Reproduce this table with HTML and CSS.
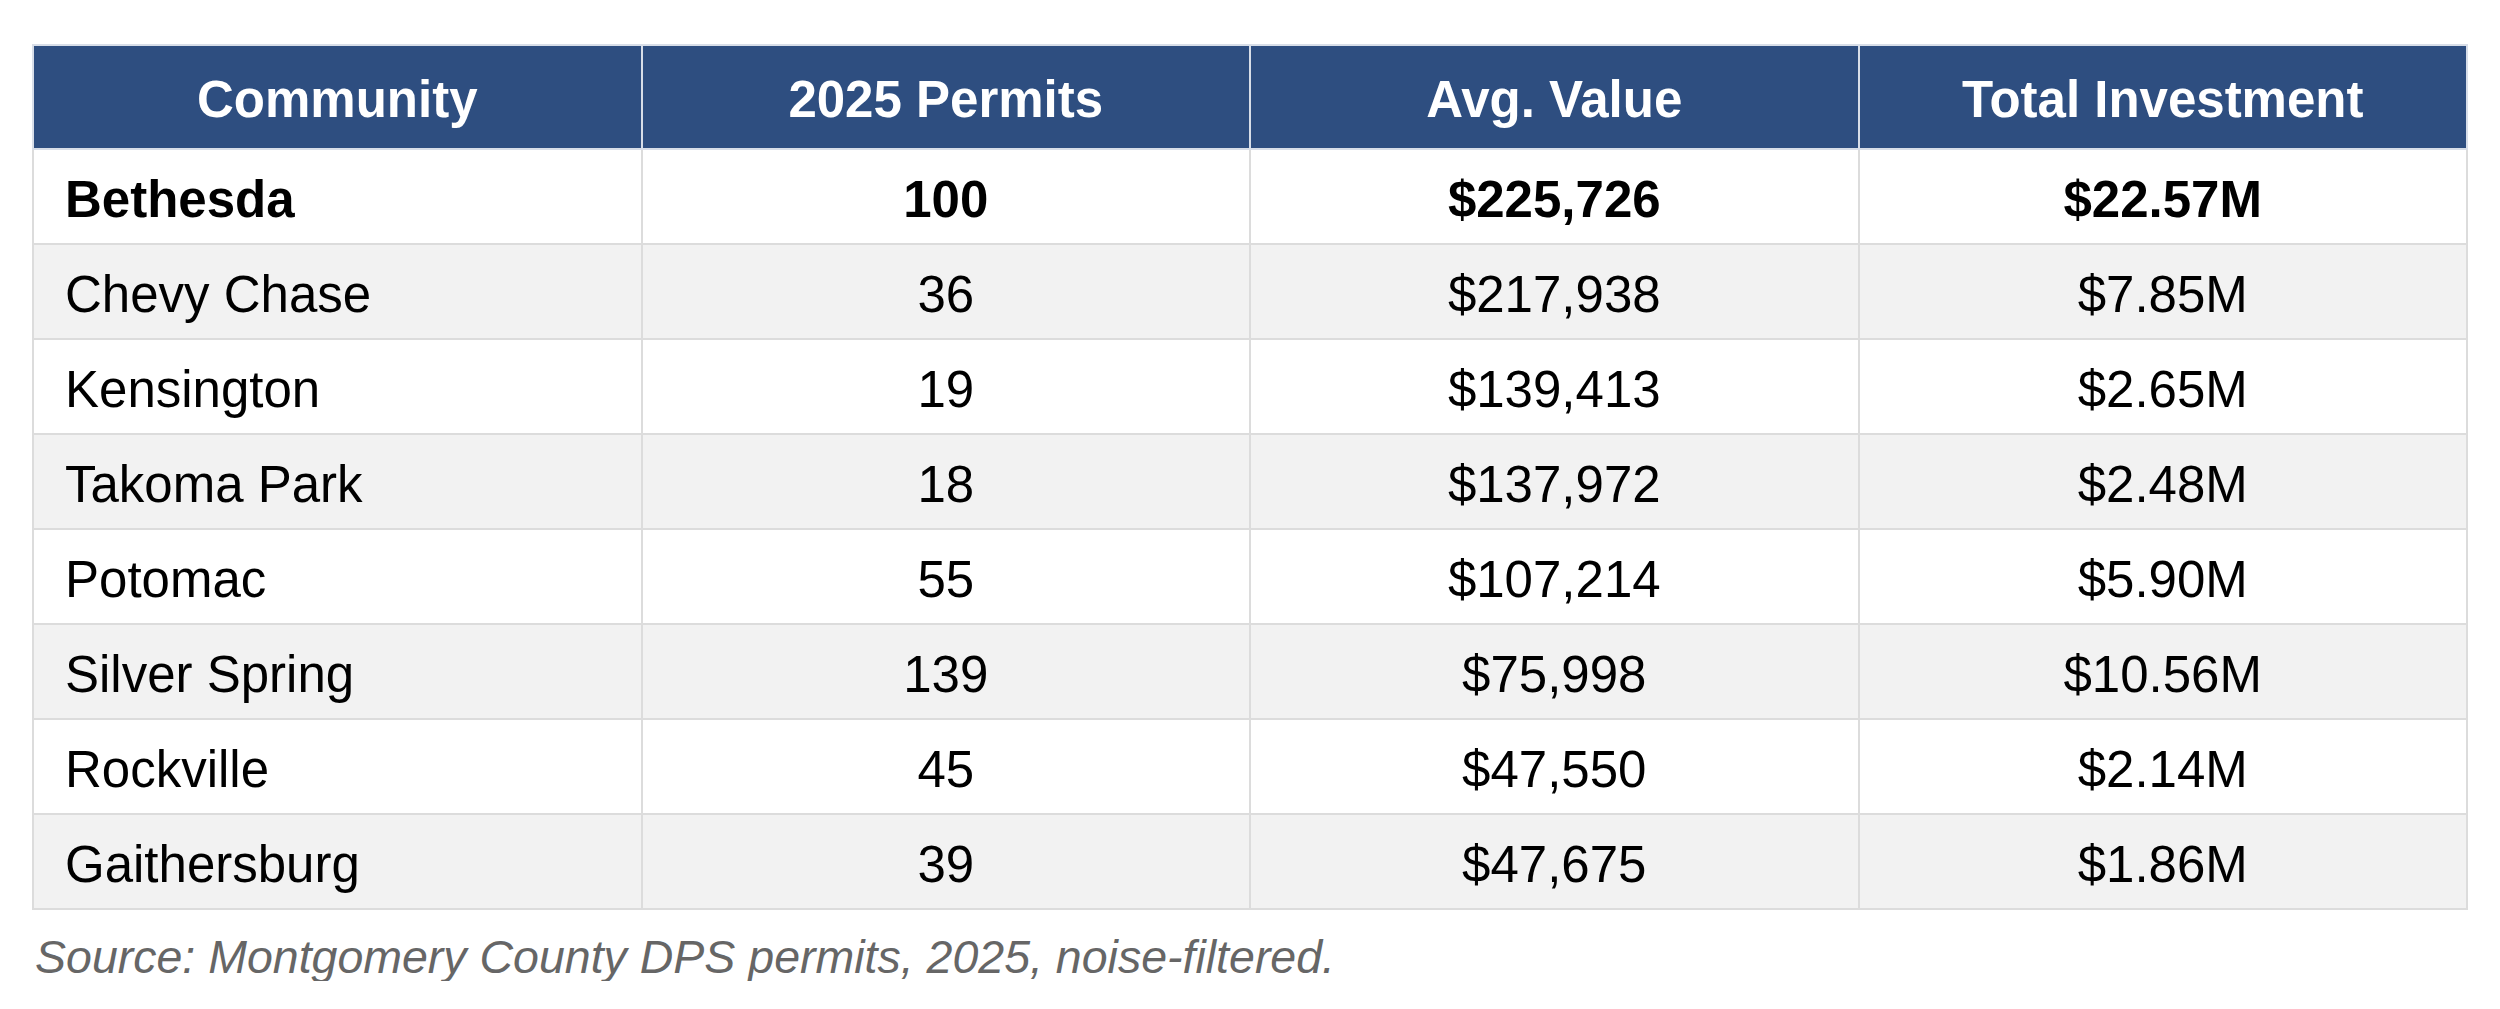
FILE: index.html
```html
<!DOCTYPE html>
<html lang="en">
<head>
<meta charset="utf-8">
<title>Permits by Community</title>
<link rel="stylesheet" href="styles.css">
</head>
<body>
<main class="page">
  <table class="permits">
    <thead>
      <tr>
        <th>Community</th>
        <th>2025 Permits</th>
        <th>Avg. Value</th>
        <th>Total Investment</th>
      </tr>
    </thead>
    <tbody>
      <tr class="top">
        <td class="name">Bethesda</td><td>100</td><td>$225,726</td><td>$22.57M</td>
      </tr>
      <tr>
        <td class="name">Chevy Chase</td><td>36</td><td>$217,938</td><td>$7.85M</td>
      </tr>
      <tr>
        <td class="name">Kensington</td><td>19</td><td>$139,413</td><td>$2.65M</td>
      </tr>
      <tr>
        <td class="name">Takoma Park</td><td>18</td><td>$137,972</td><td>$2.48M</td>
      </tr>
      <tr>
        <td class="name">Potomac</td><td>55</td><td>$107,214</td><td>$5.90M</td>
      </tr>
      <tr>
        <td class="name">Silver Spring</td><td>139</td><td>$75,998</td><td>$10.56M</td>
      </tr>
      <tr>
        <td class="name">Rockville</td><td>45</td><td>$47,550</td><td>$2.14M</td>
      </tr>
      <tr>
        <td class="name">Gaithersburg</td><td>39</td><td>$47,675</td><td>$1.86M</td>
      </tr>
    </tbody>
  </table>
  <p class="source">Source: Montgomery County DPS permits, 2025, noise-filtered.</p>
</main>
</body>
</html>
```

FILE: styles.css
```css
html, body {
  margin: 0;
  padding: 0;
  background: #ffffff;
}

body {
  font-family: "Liberation Sans", Arial, Helvetica, sans-serif;
  color: #000000;
}

.page {
  padding: 44px 32px 0 32px;
}

.permits {
  width: 100%;
  border-collapse: collapse;
  table-layout: fixed;
  font-size: 51px;
}

.permits th,
.permits td {
  border: 2px solid #dcdcdc;
  padding: 0;
  text-align: center;
  vertical-align: middle;
}

.permits thead tr {
  height: 104px;
}

.permits th {
  background: #2e4e80;
  color: #ffffff;
  font-weight: bold;
  border-color: #d8dee8;
  padding-top: 4px;
}

.permits tbody tr {
  height: 95px;
  background: #ffffff;
}

.permits tbody tr:nth-child(even) {
  background: #f2f2f2;
}

.permits td {
  padding-top: 6px;
}

.permits td.name {
  text-align: left;
  padding-left: 31px;
}

.permits tr.top td {
  font-weight: bold;
}

.source {
  margin: 24px 0 0 3px;
  font-size: 46.5px;
  line-height: 1;
  font-style: italic;
  color: #666666;
}
```
